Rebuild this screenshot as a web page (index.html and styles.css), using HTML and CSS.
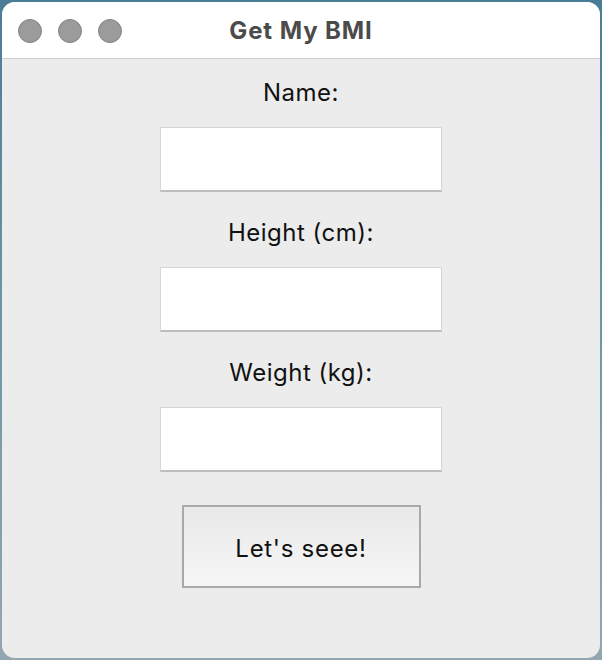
FILE: index.html
```html
<!DOCTYPE html>
<html>
<head>
<meta charset="utf-8">
<title>Get My BMI</title>
<link rel="stylesheet" href="styles.css">
</head>
<body>
<div class="desktop">
  <div class="window">
    <div class="titlebar">
      <div class="lights">
        <span class="light"></span>
        <span class="light"></span>
        <span class="light"></span>
      </div>
      <div class="title">Get My BMI</div>
      <div class="spacer"></div>
    </div>
    <div class="content">
      <div class="field">
        <label class="label">Name:</label>
        <div class="input"></div>
      </div>
      <div class="field">
        <label class="label">Height (cm):</label>
        <div class="input"></div>
      </div>
      <div class="field">
        <label class="label">Weight (kg):</label>
        <div class="input"></div>
      </div>
      <button class="button">Let's seee!</button>
    </div>
  </div>
</div>
</body>
</html>
```

FILE: styles.css
```css
html, body {
  margin: 0;
  padding: 0;
}
body {
  width: 602px;
  height: 660px;
  overflow: hidden;
  font-family: Inter, "Liberation Sans", sans-serif;
}
.desktop {
  width: 602px;
  height: 660px;
  box-sizing: border-box;
  padding: 2px 2px 2px 2px;
  background: linear-gradient(180deg, #4a7d95 0%, #6f96a6 50%, #93a7b0 100%);
}
.window {
  width: 598px;
  height: 656px;
  border-radius: 13px;
  overflow: hidden;
  background: #ececec;
  display: flex;
  flex-direction: column;
}
.titlebar {
  height: 56px;
  background: #ffffff;
  border-bottom: 1px solid #cfcfcf;
  display: grid;
  grid-template-columns: 1fr auto 1fr;
  align-items: center;
  flex: none;
}
.lights {
  display: flex;
  gap: 16px;
  padding-left: 16px;
  padding-top: 1px;
}
.light {
  width: 22px;
  height: 22px;
  border-radius: 50%;
  background: #9b9b9b;
  border: 1px solid #838383;
}
.title {
  font-weight: 700;
  font-size: 24px;
  letter-spacing: 0.9px;
  color: #4b4b4b;
  line-height: 28px;
  padding-top: 2px;
}
.content {
  display: flex;
  flex-direction: column;
  align-items: center;
  padding-top: 20px;
}
.field {
  display: flex;
  flex-direction: column;
  align-items: center;
  margin-bottom: 27px;
}
.label {
  font-size: 24px;
  letter-spacing: 0.5px;
  line-height: 28px;
  color: #111111;
  margin-bottom: 20px;
}
.input {
  width: 282px;
  background: #ffffff;
  border: 1px solid #d6d6d6;
  border-bottom: 2px solid #bdbdbd;
  box-sizing: border-box;
  height: 65px;
}
.button {
  margin-top: 6px;
  width: 239px;
  height: 83px;
  box-sizing: border-box;
  border: 2px solid #a9a9a9;
  background: linear-gradient(180deg, #e9e9e9 0%, #f6f6f6 100%);
  font-family: Inter, "Liberation Sans", sans-serif;
  font-size: 24px;
  letter-spacing: 0.7px;
  color: #111111;
  padding: 4px 0 0 0;
  border-radius: 0;
}
```
